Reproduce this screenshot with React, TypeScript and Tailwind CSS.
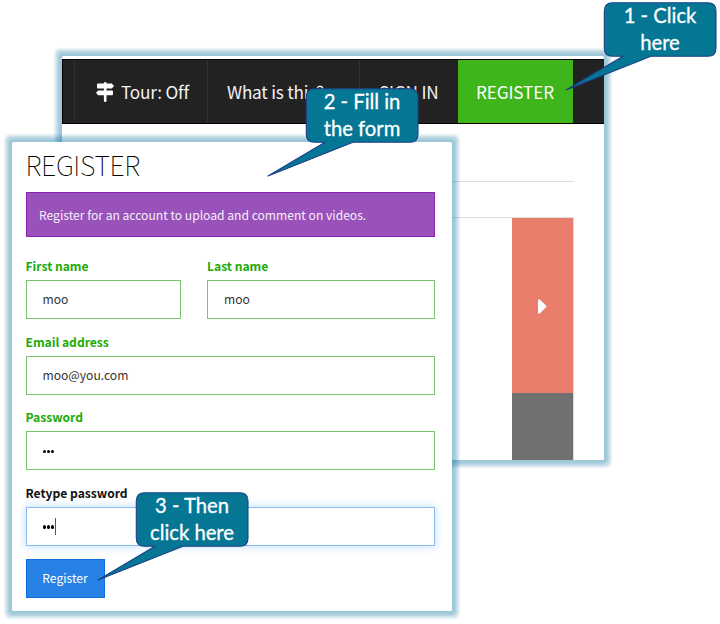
import React from "react";

const SANS = "font-['Noto_Sans_CJK_SC',sans-serif]";
const GLOW =
  "rounded-[1.5px] shadow-[0_0_1px_2px_rgba(0,120,150,0.05),0_0_1px_3px_rgba(0,120,150,0.05),0_0_2px_4px_rgba(0,120,150,0.07),0_0_2px_5px_rgba(0,120,150,0.07),0_0_2px_6px_rgba(0,120,150,0.07),0_0_2px_7px_rgba(0,120,150,0.08),0_0_2px_7.5px_rgba(0,120,150,0.07)]";

function Signpost() {
  return (
    <svg viewBox="0 0 18 20" className="h-5 w-[18px] shrink-0 fill-white">
      <rect x="7.9" y="0" width="2.6" height="20" rx="1.2" />
      <path d="M2 1.4H15.8L18 3.9 15.8 6.4H2A1 1 0 0 1 1 5.4V2.4A1 1 0 0 1 2 1.4Z" />
      <path d="M2.2 8.4H16A1 1 0 0 1 17 9.4V12.2A1 1 0 0 1 16 13.2H2.2L0 10.8Z" />
    </svg>
  );
}

function SiteWindow() {
  return (
    <section className={`absolute left-[62px] top-14 h-[404px] w-[542px] bg-white pt-[3px] ${GLOW}`}>
      <nav className="flex h-[65px] border-y border-l border-black bg-[#222] text-[17.2px] leading-[63px] tracking-[-0.2px] whitespace-nowrap text-[#f2f2f2]">
        <div className="w-[12px] border-r border-[#303030]" />
        <div className="flex w-[133px] items-center border-r border-[#303030] pl-[21px]">
          <Signpost />
          <span className="ml-[7px]">Tour: Off</span>
        </div>
        <div className="w-[152px] border-r border-[#303030] pl-[19px]">What is this?</div>
        <div className="w-[98px] pl-[19px]">SIGN IN</div>
        <div className="w-[115px] bg-[#3eb51a] pl-[18px] tracking-[-0.15px] text-white">REGISTER</div>
      </nav>
      <div className="mr-[30px] h-[58px] border-b border-[#ddd]" />
      <div className="mr-[30px] h-9 border-b border-[#ddd]" />
      <div className="ml-[450px] flex h-[174.5px] w-[62px] items-center justify-center border-r border-[#ddd] bg-[#e97e6d] bg-clip-padding pt-[2px] pr-px">
        <svg viewBox="0 0 9 15" className="h-[15px] w-[9px] fill-white">
          <path d="M0 1.2Q0 0 1 .2L1.8.5 8.2 6.8Q8.8 7.4 8.2 8L1.8 14.4 1 14.8Q0 15 0 13.8Z" />
        </svg>
      </div>
      <div className="ml-[450px] h-[67.5px] w-[62px] border-r border-[#ddd] bg-[#707070] bg-clip-padding" />
    </section>
  );
}

type FieldProps = { label: string; value: string; state?: "valid" | "focus"; className?: string };

function Field({ label, value, state = "valid", className = "" }: FieldProps) {
  const focus = state === "focus";
  return (
    <label className={`block ${className}`}>
      <span
        className={`block h-[26px] text-[12.1px] leading-[24px] font-bold whitespace-nowrap ${focus ? "text-[#111]" : "text-[#1aab07]"}`}
      >
        {label}
      </span>
      <span
        className={`flex h-[39px] items-center border bg-white pl-4 text-[12.1px] text-[#333] ${
          focus ? "border-[#8abaf0] shadow-[0_0_8px_1px_rgba(70,160,240,0.3)]" : "border-[#7ac46d]"
        }`}
      >
        {value === "•••" ? (
          <span className="flex h-[17px] items-center gap-[0.8px] pt-[2px]">
            <i className="size-[3.4px] rounded-full bg-black" />
            <i className="size-[3.4px] rounded-full bg-black" />
            <i className="size-[3.4px] rounded-full bg-black" />
            {focus && <i className="-mt-[2px] h-[17px] w-px bg-[#555]" />}
          </span>
        ) : (
          value
        )}
      </span>
    </label>
  );
}

function RegisterWindow() {
  return (
    <section className={`absolute left-3 top-[142px] h-[469px] w-[440px] bg-white pr-[17px] pl-[13.5px] ${GLOW}`}>
      <h1 className="h-[50px] text-[27px] leading-[46px] font-thin tracking-[-0.35px] text-black">REGISTER</h1>
      <div className="h-[45px] border border-[#8a24b0] bg-[#9852ba] pl-[12.5px] text-[12.1px] leading-[43px] whitespace-nowrap text-[#f7effa]">
        Register for an account to upload and comment on videos.
      </div>
      <div className="mt-[17px] flex gap-[26.5px]">
        <Field label="First name" value="moo" className="w-[155px]" />
        <Field label="Last name" value="moo" className="w-[228px]" />
      </div>
      <Field label="Email address" value="moo@you.com" className="mt-[10.5px]" />
      <Field label="Password" value="•••" className="mt-[10.5px]" />
      <Field label="Retype password" value="•••" state="focus" className="mt-[10.5px]" />
      <button className="mt-[13px] block h-[39px] w-[79px] border border-[#0d70df] bg-[#2881e4] text-center text-[12.1px] text-white">
        Register
      </button>
    </section>
  );
}

function Callout({ lines, className }: { lines: [string, string]; className: string }) {
  return (
    <aside className={`absolute h-[90px] w-[152px] ${className}`}>
      <svg viewBox="0 0 152 90" className="absolute inset-0 h-full w-full overflow-visible">
        <path
          d="M48.5 .7H144Q152 .7 152 9V46Q152 54.3 144 54.3H87L2 88 59 54.3H48.5Q40.3 54.3 40.3 46V9Q40.3 .7 48.5 .7Z"
          fill="#057795"
          stroke="#1c3f86"
          strokeWidth="1.1"
          strokeLinejoin="round"
        />
      </svg>
      <p className="relative ml-[39.5px] w-28 scale-x-[0.94] text-center font-['Lato',sans-serif] text-[21.5px] leading-[26.5px] whitespace-nowrap text-white [-webkit-text-stroke:0.3px_white]">
        {lines[0]}
        <br />
        {lines[1]}
      </p>
    </aside>
  );
}

export default function App() {
  return (
    <main className={`relative h-[624px] w-[720px] overflow-hidden bg-white ${SANS}`}>
      <SiteWindow />
      <RegisterWindow />
      <Callout lines={["1 - Click", "here"]} className="left-[564px] top-[2px]" />
      <Callout lines={["2 - Fill in", "the form"]} className="left-[266px] top-[88px]" />
      <Callout lines={["3 - Then", "click here"]} className="left-24 top-[492px]" />
    </main>
  );
}
